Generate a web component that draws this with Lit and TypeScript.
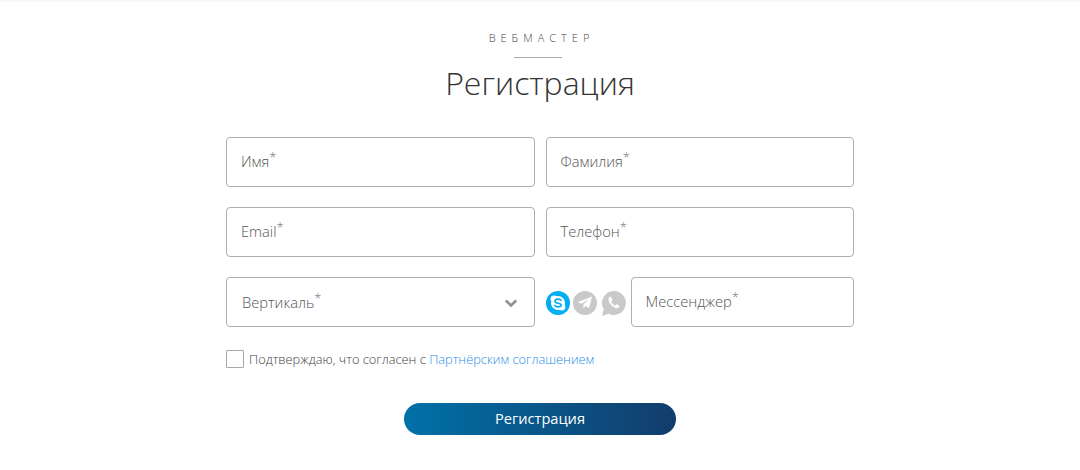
import { LitElement, html, css } from "lit";
import { customElement } from "lit/decorators.js";

@customElement("app-root")
export class AppRoot extends LitElement {
  static styles = css`
    :host { display: block; width: 1080px; height: 470px; background: #fff; font-family: "Open Sans", sans-serif; overflow: hidden; }
    .page { display: flex; flex-direction: column; align-items: center; border-top: 2px solid #f7f7f7; height: 468px; box-sizing: border-box; }
    .eyebrow { margin-top: 28px; height: 16px; line-height: 16px; font-size: 11px; font-weight: 300; letter-spacing: 5px; color: #444; padding-left: 3px; }
    .rule { width: 48px; height: 1px; background: #a9abb0; margin: 11px 4px 0 0; }
    h1 { margin: 3px 0 0; font-size: 32px; line-height: 44px; font-weight: 300; color: #333; }
    .form { width: 628px; margin: 32px 0 0 0; display: flex; flex-direction: column; gap: 20px; }
    .row { display: flex; gap: 11px; }
    .field { flex: 1; min-width: 0; height: 50px; box-sizing: border-box; border: 1px solid #aeaeae; border-radius: 4px; display: flex; align-items: center; padding: 0 14px 3px; font-size: 14.7px; font-weight: 300; color: #555; }
    .field sup { font-size: 13px; line-height: 1; align-self: flex-start; margin-top: 13px; color: #777; }
    .half { flex: none; width: 308.5px; }
    .select { padding: 0 16px 0 15px; justify-content: space-between; }
    .select sup { vertical-align: 5px; }
    .messenger-group { display: flex; flex: 1; align-items: center; gap: 5px; }
    .icons { display: flex; width: 80px; flex: none; justify-content: space-between; padding-top: 4px; }
    .icons svg { width: 24px; height: 26px; display: block; }
    .icons svg.wa { width: 25px; }
    .msg { flex: 1; }
    .agree { display: flex; align-items: center; gap: 5px; margin-top: 23px; width: 628px; font-size: 12.8px; font-weight: 300; color: #444; height: 18px; }
    .box { width: 18px; height: 18px; box-sizing: border-box; border: 1px solid #a8a8a8; border-radius: 1px; }
    .agree a { color: #1f8fe8; text-decoration: none; }
    .btn { margin-top: 35px; width: 272px; height: 32px; border: 0; border-radius: 16px; background: linear-gradient(90deg, #0071a8 0%, #123c6b 100%); color: #fff; font-family: inherit; font-size: 14.6px; font-weight: 400; padding: 0 0 2px; }
  `;

  private field(label: string, extra = "") {
    return html`<div class="field ${extra}"><span>${label}</span><sup>*</sup></div>`;
  }

  render() {
    return html`
      <div class="page">
        <div class="eyebrow">ВЕБМАСТЕР</div>
        <div class="rule"></div>
        <h1>Регистрация</h1>
        <div class="form">
          <div class="row">${this.field("Имя")}${this.field("Фамилия")}</div>
          <div class="row">${this.field("Email")}${this.field("Телефон")}</div>
          <div class="row">
            <div class="field half select">
              <div><span>Вертикаль</span><sup>*</sup></div>
              <svg width="14" height="12" viewBox="0 0 14 12"><path d="M1.800 4.500 7 9.500 12.200 4.500" fill="none" stroke="#8f8f8f" stroke-width="2.600"/></svg>
            </div>
            <div class="messenger-group">
              <div class="icons">
                <svg viewBox="0 0 24 26">
                  <circle cx="12" cy="12" r="12" fill="#00aff0"/>
                  <circle cx="12" cy="12" r="7" fill="#fff"/>
                  <circle cx="8" cy="8" r="3.400" fill="#fff"/>
                  <circle cx="16" cy="16" r="3.400" fill="#fff"/>
                  <path d="M15.200 9.400C14.600 8.500 13.400 8.100 12 8.100c-1.800 0-3.100.8-3.100 2.100 0 2.800 6.300 1.500 6.300 3.800 0 1.200-1.400 1.900-3.100 1.900-1.500 0-2.700-.5-3.400-1.500" fill="none" stroke="#00aff0" stroke-width="1.600" stroke-linecap="round"/>
                </svg>
                <svg viewBox="0 0 24 26">
                  <circle cx="12" cy="12" r="12" fill="#c9c9c9"/>
                  <path d="M19 5.500 4.500 11.300l4 1.400 7.200-4.700-5.400 5.700V17.500l2.500-2.500 3.200 2.300z" fill="#fff"/>
                </svg>
                <svg class="wa" viewBox="0 0 25 26">
                  <path d="M13 0a12 12 0 0 0-10.300 18.100L1 25l6.600-2.200A12 12 0 1 0 13 0z" fill="#c9c9c9"/>
                  <path d="M9 5.800c-.8.4-1.800 1.600-1.600 3 .4 3.600 4.300 7.800 8.200 8.400 1.400.2 2.600-.7 3-1.600.2-.5 0-.9-.4-1.100l-2.200-1.100c-.4-.2-.8-.1-1 .2l-.8 1c-1.800-.7-3.200-2.100-3.900-3.900l.9-.9c.3-.3.3-.6.2-1L10.400 6.300c-.3-.6-.8-.8-1.400-.5z" fill="#fff"/>
                </svg>
              </div>
              <div class="field msg"><span>Мессенджер</span><sup>*</sup></div>
            </div>
          </div>
        </div>
        <div class="agree"><div class="box"></div><span>Подтверждаю, что согласен с <a href="#">Партнёрским соглашением</a></span></div>
        <button class="btn">Регистрация</button>
      </div>
    `;
  }
}
